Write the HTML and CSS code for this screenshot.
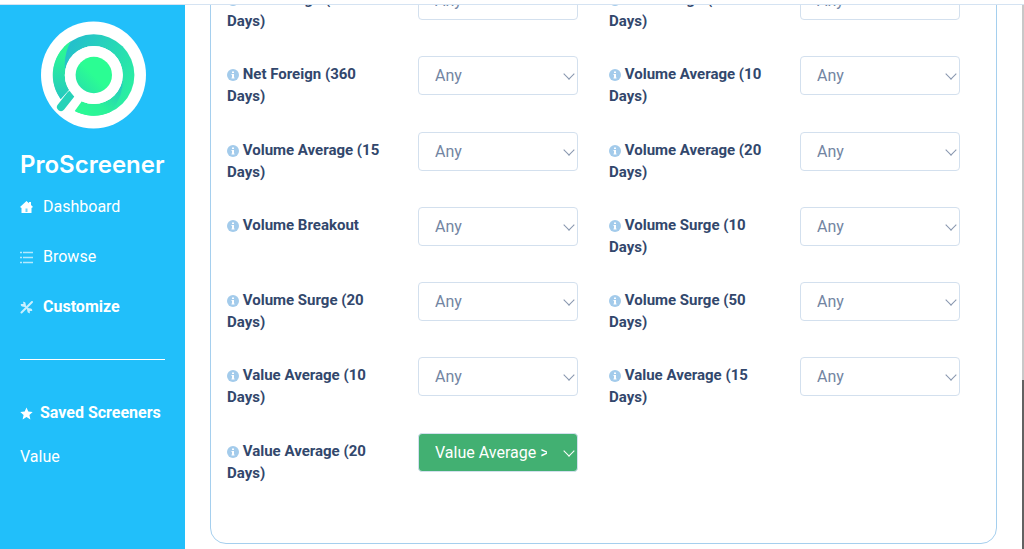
FILE: index.html
```html
<!DOCTYPE html>
<html lang="en">
<head>
  <meta charset="UTF-8" />
  <meta name="viewport" content="width=device-width, initial-scale=1" />
  <title>ProScreener - Customize</title>
  <link rel="stylesheet" href="styles.css">
</head>
<body>
  <header class="topbar"></header>
  <div class="layout">
    <aside class="sidebar">
      <svg class="logo" viewBox="41 21 105 108" role="img" aria-label="ProScreener logo">
        <defs>
          <linearGradient id="ring" x1="0" y1="0" x2="1" y2="0.6">
            <stop offset="0.2" stop-color="#24bfcc" />
            <stop offset="1" stop-color="#2aeea2" />
          </linearGradient>
          <linearGradient id="edge" x1="0" y1="0" x2="0" y2="1">
            <stop offset="0.2" stop-color="#2bf596" />
            <stop offset="1" stop-color="#24c2c6" />
          </linearGradient>
          <linearGradient id="bottom" x1="1" y1="0" x2="0" y2="1">
            <stop offset="0" stop-color="#25c0c8" />
            <stop offset="0.6" stop-color="#2bf298" />
            <stop offset="1" stop-color="#2bfd93" />
          </linearGradient>
          <linearGradient id="dot" x1="1" y1="0" x2="0" y2="1">
            <stop offset="0.5" stop-color="#2bfd93" />
            <stop offset="1" stop-color="#27dcae" />
          </linearGradient>
        </defs>
        <ellipse cx="93.5" cy="75" rx="52.5" ry="53.5" fill="#fff" />
        <circle cx="93.7" cy="75" r="40.7" fill="url(#ring)" />
        <path d="M71 41 A40.700 40.700 0 0 0 66 105 L72 92 Q58 64 71 41 Z" fill="url(#edge)" />
        <path d="M122.500 78 Q124 96 111 111.800 A40.700 40.700 0 0 1 72 109.500 L82 98 Z" fill="url(#bottom)" />
        <circle cx="93.8" cy="75" r="29" fill="#fff" />
        <path d="M60 100 L69 90 L82 101 L74 112 L66 114 Z" fill="#fff" />
        <path d="M70.500 95 L61 107" stroke="#26d2b8" stroke-width="8" stroke-linecap="round" />
        <circle cx="93.8" cy="75" r="29" fill="#fff" />
        <circle cx="93.8" cy="75" r="18.2" fill="url(#dot)" />
      </svg>
      <h1 class="brand">ProScreener</h1>
      <nav class="menu">
        <a href="#">
          <svg class="icon" viewBox="0 0 13 13"><path d="M6.500 0 L9 2.200 V1 H11 V4 L13 6 L11.500 7 V12 H1.500 V7 L0 6 Z" fill="#fff" /><path d="M5.500 7.500 h2 v3.500 h-2 z" fill="#6fd4fb" /></svg>
          Dashboard
        </a>
        <a href="#">
          <svg class="icon" viewBox="0 0 13 13"><path d="M0 1.500 h2 M0 6.500 h2 M0 11.500 h2 M3 1.500 h10 M3 6.500 h10 M3 11.500 h10" stroke="#b5e9fd" stroke-width="1.500" /></svg>
          Browse
        </a>
        <a href="#" class="active">
          <svg class="icon" viewBox="0 0 13 13">
            <path d="M12 1 L7.500 5.500 M5.500 7.500 L1.500 11.500" stroke="#c8effe" stroke-width="2" stroke-linecap="round" />
            <path d="M3.500 3.500 L10 10" stroke="#c8effe" stroke-width="2" />
            <path d="M0.800 3 A2.500 2.500 0 1 0 3 0.800 L3.500 3 Z M12.200 10 A2.500 2.500 0 1 0 10 12.200 L9.500 10 Z" fill="#c8effe" />
          </svg>
          Customize
        </a>
      </nav>
      <hr class="divider" />
      <h2 class="saved-title">
        <svg class="icon" viewBox="0 0 13 13"><path d="M6.500 0.500 L8.300 4.600 L12.700 5 L9.400 8 L10.400 12.400 L6.500 10.100 L2.600 12.400 L3.600 8 L0.300 5 L4.700 4.600 Z" fill="#fff" /></svg>
        Saved Screeners
      </h2>
      <a href="#" class="saved-link">Value</a>
    </aside>

    <main class="content">
      <form class="card">
        <div class="filters" id="filters"></div>
      </form>
    </main>
    <div class="scrollbar"><div class="thumb"></div></div>
  </div>

  <script>
    const filters = [
      ["Net Foreign (60 Days)"],
      ["Net Foreign (180 Days)"],
      ["Net Foreign (360 Days)"],
      ["Volume Average (10 Days)"],
      ["Volume Average (15 Days)"],
      ["Volume Average (20 Days)"],
      ["Volume Breakout"],
      ["Volume Surge (10 Days)"],
      ["Volume Surge (20 Days)"],
      ["Volume Surge (50 Days)"],
      ["Value Average (10 Days)"],
      ["Value Average (15 Days)"],
      ["Value Average (20 Days)", "Value Average > 1B"]
    ];

    const icon = `<svg class="info" viewBox="0 0 12 12"><circle cx="6" cy="6" r="6" fill="#a3cbeb" /><path d="M5 2.500 h2 v1.500 h-2 z M4.500 5 h2.500 v3.500 h0.500 v1 h-3 v-1 h0.500 v-2.500 h-0.500 z" fill="#fff" /></svg>`;

    document.getElementById("filters").innerHTML = filters.map(([name, value], i) => `
      <label class="filter-label" for="filter${i}">${icon} ${name}</label>
      <div class="select-box${value ? " selected" : ""}">
        <select id="filter${i}">
          ${value ? `<option>${value.replace(">", "&gt;")}</option>` : ""}
          <option>Any</option>
        </select>
      </div>`).join("");
  </script>
</body>
</html>
```
FILE: styles.css
```css
* { box-sizing: border-box; }
body { margin: 0; height: 100vh; display: flex; flex-direction: column; overflow: hidden; font-family: Roboto, sans-serif; background: #fff; color: #32476c; }
.topbar { height: 5px; flex: none; border-bottom: 1px solid #d5e3f2; }
.layout { flex: 1; min-height: 0; display: flex; }

.sidebar { width: 185px; flex: none; padding: 16px 20px; background: #21bffa; color: #fff; font-size: 16px; overflow: hidden; }
.logo { display: block; width: 105px; height: 108px; margin: 0 auto 0 21px; }
.brand { margin: 20px 0 0; font-family: Inter, sans-serif; font-size: 24px; font-weight: 600; line-height: 32px; white-space: nowrap; }
.menu { display: flex; flex-direction: column; gap: 26px; margin-top: 14px; }
.menu a { display: flex; align-items: center; gap: 10px; line-height: 24px; color: #fff; text-decoration: none; }
.menu .active { font-weight: bold; }
.icon { width: 13px; height: 13px; flex: none; }
.divider { height: 1px; margin: 40px 0 41px; border: 0; background: #fff; }
.saved-title { display: flex; align-items: center; gap: 7px; margin: 0; font-size: 16px; line-height: 24px; white-space: nowrap; }
.saved-link { display: block; margin-top: 20px; line-height: 24px; color: #fff; text-decoration: none; }

.content { flex: 1; min-width: 0; padding: 0 25px 5px; display: flex; flex-direction: column; justify-content: flex-end; overflow: hidden; }
.card { flex: none; padding: 40px 36px 35px 16px; border: 1px solid #a5cfee; border-radius: 16px; }
.filters { min-height: 527px; display: grid; grid-template-columns: repeat(4, 1fr); grid-auto-rows: 1fr; column-gap: 31px; }
.filter-label { padding-top: 7px; font-size: 15px; font-weight: bold; line-height: 22px; }
.info { width: 12px; height: 12px; vertical-align: -2px; }
.select-box { position: relative; height: 39px; }
.select-box select { appearance: none; width: 100%; height: 39px; padding: 0 30px 0 16px; border: 1px solid #d3e0ee; border-radius: 4px; background: #fff; color: #7385a2; font-family: inherit; font-size: 16px; }
.select-box::after { content: ""; position: absolute; top: 14px; right: 5px; width: 7px; height: 7px; border: solid #8796ae; border-width: 0 1px 1px 0; transform: rotate(45deg); pointer-events: none; }
.selected select { background: #42b072; color: #fff; }
.selected::after { border-color: #fff; }

.scrollbar { width: 2px; flex: none; background: #c8c8c8; display: flex; align-items: flex-end; }
.thumb { width: 100%; height: 31%; background: #626262; }
```
